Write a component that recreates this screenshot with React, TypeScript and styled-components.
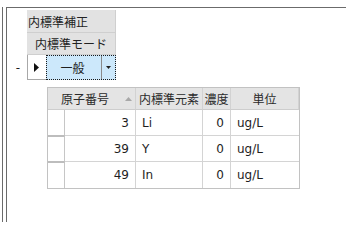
import React from "react";
import styled, { createGlobalStyle } from "styled-components";

const Global = createGlobalStyle`
  html, body { margin: 0; padding: 0; background: #fff; }
  #root { width: 346px; height: 222px; overflow: hidden; }
`;

const FONT = `"DejaVu Sans", "Noto Sans CJK JP", sans-serif`;

const Page = styled.div`
  width: 346px;
  height: 222px;
  box-sizing: border-box;
  padding-left: 2px;
  font-family: ${FONT};
  font-size: 12px;
  color: #1e1e1e;
  background: #fff;
`;

const OuterRule = styled.div`
  height: 100%;
  box-sizing: border-box;
  border-left: 1px solid #6b6b6b;
  padding-left: 3px;
`;

const Frame = styled.div`
  height: calc(100% - 7px);
  margin-top: 7px;
  box-sizing: border-box;
  border-left: 1px solid #6b6b6b;
  border-top: 1px solid #6b6b6b;
  padding-top: 2px;
`;

const Master = styled.div`
  display: grid;
  grid-template-columns: 20px 19px 70px;
  grid-template-rows: 23px 22px 25px;
`;

const MasterHead = styled.div<{ $center?: boolean }>`
  grid-column: 2 / 4;
  box-sizing: border-box;
  background: #e2e2e2;
  border-right: 1px solid #cfcfcf;
  border-bottom: 1px solid #cfcfcf;
  display: flex;
  align-items: center;
  justify-content: ${(p) => (p.$center ? "center" : "flex-start")};
  padding-left: ${(p) => (p.$center ? "0" : "1px")};
  color: #222;
`;

const Expander = styled.div`
  grid-column: 1;
  display: flex;
  align-items: center;
  justify-content: center;
  padding-left: 2px;
  font-size: 12px;
`;

const Indicator = styled.div`
  box-sizing: border-box;
  background: #fff;
  border-left: 1px solid #a8a8a8;
  border-bottom: 1px solid #a8a8a8;
  display: flex;
  align-items: center;
  justify-content: center;
  padding-right: 2px;
`;

const Combo = styled.div`
  box-sizing: border-box;
  background: #cce8fb;
  border: 1px dotted #1a1a1a;
  display: flex;
`;

const ComboText = styled.div`
  flex: 1;
  display: flex;
  align-items: center;
  justify-content: center;
  padding-right: 3px;
`;

const ComboButton = styled.div`
  width: 13px;
  border-left: 1px solid #8a8a8a;
  display: flex;
  align-items: center;
  justify-content: center;
`;

const Detail = styled.div`
  margin: 7px 0 0 40px;
  width: 253px;
  box-sizing: border-box;
  border: 1px solid #c2c2c2;
  display: grid;
  grid-template-columns: 17px 71px 67px 28px 68px;
  grid-template-rows: 22px repeat(3, 26px);
`;

const HeadCell = styled.div<{ $span?: number }>`
  grid-column: span ${(p) => p.$span ?? 1};
  box-sizing: border-box;
  background: #e4e4e4;
  border-right: 1px solid #d2d2d2;
  border-bottom: 1px solid #cdcdcd;
  display: flex;
  align-items: center;
  justify-content: center;
  color: #2a2a2a;
  &:last-child { border-right: none; }
`;

const SortHead = styled(HeadCell)`
  justify-content: flex-start;
  padding-left: 13px;
  gap: 16px;
`;

const RowHead = styled.div<{ $first?: boolean; $last?: boolean }>`
  box-sizing: border-box;
  background: #fff;
  border-right: 1px solid #c6c6c6;
  border-top: ${(p) => (p.$first ? "none" : "1px solid #bdbdbd")};
  border-bottom: ${(p) => (p.$last ? "none" : "1px solid #bdbdbd")};
`;

const Cell = styled.div<{ $right?: boolean; $last?: boolean; $end?: boolean }>`
  box-sizing: border-box;
  background: #fff;
  border-right: ${(p) => (p.$end ? "none" : "1px solid #d4d4d4")};
  border-bottom: ${(p) => (p.$last ? "none" : "1px solid #d4d4d4")};
  display: flex;
  align-items: center;
  justify-content: ${(p) => (p.$right ? "flex-end" : "flex-start")};
  padding: ${(p) => (p.$right ? "0 6px 0 0" : "0 0 0 6px")};
`;

const rows = [
  { num: "3", el: "Li", conc: "0", unit: "ug/L" },
  { num: "39", el: "Y", conc: "0", unit: "ug/L" },
  { num: "49", el: "In", conc: "0", unit: "ug/L" },
];

export default function App() {
  return (
    <>
      <Global />
      <Page>
        <OuterRule>
          <Frame>
            <Master>
              <MasterHead>内標準補正</MasterHead>
              <MasterHead $center>内標準モード</MasterHead>
              <Expander>-</Expander>
              <Indicator>
                <svg width="5" height="9" viewBox="0 0 5 9">
                  <path d="M0 0 L5 4.5 L0 9 Z" fill="#111" />
                </svg>
              </Indicator>
              <Combo>
                <ComboText>一般</ComboText>
                <ComboButton>
                  <svg width="5" height="3" viewBox="0 0 5 3">
                    <path d="M0 0 L5 0 L2.5 3 Z" fill="#222" />
                  </svg>
                </ComboButton>
              </Combo>
            </Master>
            <Detail>
              <SortHead $span={2}>
                <span>原子番号</span>
                <svg width="7" height="4" viewBox="0 0 7 4">
                  <path d="M0 4 L3.5 0 L7 4 Z" fill="#a8a8a8" />
                </svg>
              </SortHead>
              <HeadCell>内標準元素</HeadCell>
              <HeadCell>濃度</HeadCell>
              <HeadCell>単位</HeadCell>
              {rows.map((r, i) => {
                const first = i === 0;
                const last = i === rows.length - 1;
                return (
                  <React.Fragment key={r.num}>
                    <RowHead $first={first} $last={last} />
                    <Cell $right $last={last}>{r.num}</Cell>
                    <Cell $last={last}>{r.el}</Cell>
                    <Cell $right $last={last}>{r.conc}</Cell>
                    <Cell $last={last} $end>{r.unit}</Cell>
                  </React.Fragment>
                );
              })}
            </Detail>
          </Frame>
        </OuterRule>
      </Page>
    </>
  );
}
